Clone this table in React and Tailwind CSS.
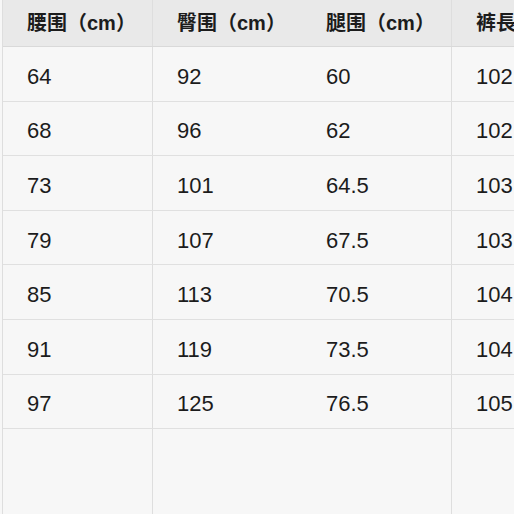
import React from 'react';

const headers = ['腰围（cm）', '臀围（cm）', '腿围（cm）', '裤長（cm）'];

const rows = [
  ['64', '92', '60', '102'],
  ['68', '96', '62', '102'],
  ['73', '101', '64.5', '103'],
  ['79', '107', '67.5', '103'],
  ['85', '113', '70.5', '104'],
  ['91', '119', '73.5', '104'],
  ['97', '125', '76.5', '105'],
];

// only the 1st and 3rd columns show a right rule in the picture
const colClass = [
  'w-[150px] border-r border-[#dedede]',
  'w-[149px]',
  'w-[150px] border-r border-[#dedede]',
  'flex-1',
];

const App = () => {
  return (
    <div
      className="w-[514px] h-[514px] overflow-hidden bg-[#f7f7f7] pl-[2px] text-[#1c1c1c]"
      style={{ fontFamily: '"Liberation Sans", "Noto Sans CJK SC", sans-serif' }}
    >
      <div className="h-full flex flex-col border-l border-[#dedede]">
        <div className="flex h-[47px] bg-[#e9e9e9] border-b border-[#d9d9d9]">
          {headers.map((h, i) => (
            <div
              key={i}
              className={`${colClass[i]} flex items-center pl-[24px] text-[20px] font-bold whitespace-nowrap overflow-hidden`}
            >
              {h}
            </div>
          ))}
        </div>

        {rows.map((r, ri) => (
          <div key={ri} className="flex h-[54.6px] border-b border-[#e0e0e0]">
            {r.map((v, i) => (
              <div
                key={i}
                className={`${colClass[i]} flex items-center pl-[24px] pt-[5px] text-[22px] whitespace-nowrap overflow-hidden`}
              >
                {v}
              </div>
            ))}
          </div>
        ))}

        <div className="flex flex-1">
          {colClass.map((c, i) => (
            <div key={i} className={c} />
          ))}
        </div>
      </div>
    </div>
  );
};

export default App;
